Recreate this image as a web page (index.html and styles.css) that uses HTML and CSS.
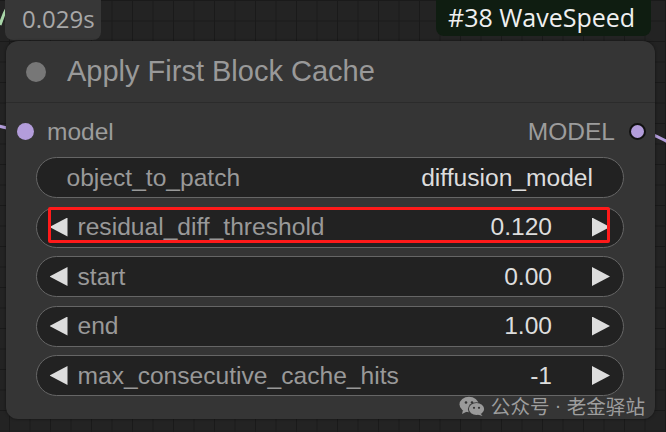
FILE: index.html
```html
<!DOCTYPE html>
<html>
<head>
<meta charset="utf-8">
<link rel="stylesheet" href="styles.css">
</head>
<body>
<div class="canvas">
  <svg class="wires" width="666" height="432" viewBox="0 0 666 432">
    <path d="M0 25 Q3 15 8 6" class="wire-green"/>
    <path d="M-6 125 L20 131" class="wire-model"/>
    <path d="M640 131 C652 133 658 137 668 142" class="wire-model"/>
  </svg>

  <div class="badge badge-time">0.029s</div>
  <div class="badge badge-group">#38 WaveSpeed</div>

  <div class="node">
    <div class="node-title">
      <span class="title-dot"></span>
      <span class="title-text">Apply First Block Cache</span>
    </div>
    <div class="node-body">
      <div class="slots">
        <div class="slot slot-in"><span class="slot-dot"></span><span>model</span></div>
        <div class="slot slot-out"><span>MODEL</span><span class="slot-dot slot-dot-out"></span></div>
      </div>
      <div class="widgets">
        <div class="widget combo">
          <span class="label">object_to_patch</span>
          <span class="value">diffusion_model</span>
        </div>
        <div class="widget number">
          <span class="arrow arrow-left"></span>
          <span class="label">residual_diff_threshold</span>
          <span class="value">0.120</span>
          <span class="arrow arrow-right"></span>
          <span class="highlight"></span>
        </div>
        <div class="widget number">
          <span class="arrow arrow-left"></span>
          <span class="label">start</span>
          <span class="value">0.00</span>
          <span class="arrow arrow-right"></span>
        </div>
        <div class="widget number">
          <span class="arrow arrow-left"></span>
          <span class="label">end</span>
          <span class="value">1.00</span>
          <span class="arrow arrow-right"></span>
        </div>
        <div class="widget number">
          <span class="arrow arrow-left"></span>
          <span class="label">max_consecutive_cache_hits</span>
          <span class="value">-1</span>
          <span class="arrow arrow-right"></span>
        </div>
      </div>
    </div>
    <div class="watermark">
      <svg class="wechat" width="26" height="20" viewBox="0 0 26 20">
        <ellipse cx="10" cy="8.5" rx="9.5" ry="7.8" fill="#9a9a9a"/>
        <path d="M4 14 L3 18 L8 15.5 Z" fill="#9a9a9a"/>
        <ellipse cx="17.5" cy="13" rx="8.6" ry="6.8" fill="#353535"/>
        <ellipse cx="17.5" cy="13" rx="7.6" ry="6" fill="#9a9a9a"/>
        <path d="M21.5 17.5 L23.5 20 L18.5 18.5 Z" fill="#9a9a9a"/>
        <circle cx="7" cy="6.5" r="1.3" fill="#353535"/>
        <circle cx="13" cy="6.5" r="1.3" fill="#353535"/>
        <circle cx="15" cy="11.8" r="1.1" fill="#353535"/>
        <circle cx="20" cy="11.8" r="1.1" fill="#353535"/>
      </svg>
      <span class="wm-text">公众号</span>
      <span class="wm-text wm-dot">·</span>
      <span class="wm-text">老金驿站</span>
    </div>
  </div>
</div>
</body>
</html>
```

FILE: styles.css
```css
* { box-sizing: border-box; }

html, body {
  margin: 0;
  padding: 0;
  width: 666px;
  height: 432px;
  overflow: hidden;
  background: #222;
}

.canvas {
  position: relative;
  width: 666px;
  height: 432px;
  background-color: #232323;
  background-image:
    linear-gradient(to right, #1a1a1a 1px, transparent 1px),
    linear-gradient(to bottom, #1a1a1a 1px, transparent 1px);
  background-size: 20.5px 20.5px;
  background-position: 9px 0px;
  font-family: "Liberation Sans", Arial, sans-serif;
}

.wires {
  position: absolute;
  left: 0;
  top: 0;
}
.wire-green { fill: none; stroke: #a8d5a8; stroke-width: 3; }
.wire-model { fill: none; stroke: #b39ddb; stroke-width: 3; }

.badge {
  position: absolute;
  top: 0;
  border-radius: 0 0 8px 8px;
  font-family: "Open Sans", "Noto Sans", sans-serif;
  font-size: 24px;
  line-height: 1.2;
  display: flex;
  align-items: center;
}
.badge-time {
  left: 5px;
  width: 96px;
  height: 40px;
  background: #373737;
  color: #a8a8a8;
  padding: 0 0 2px 17px;
}
.badge-group {
  left: 436px;
  width: 215px;
  height: 36px;
  background: #0f1d11;
  color: #f0f0f0;
  font-size: 25px;
  padding: 0 0 2px 12px;
}

.node {
  position: absolute;
  left: 6px;
  top: 41px;
  width: 649px;
  height: 378px;
  background: #353535;
  border-radius: 12px;
  box-shadow: 0 0 3px rgba(0,0,0,0.5);
}

.node-title {
  height: 62px;
  display: flex;
  align-items: center;
  padding-left: 20px;
  border-bottom: 1px solid #2b2b2b;
}
.title-dot {
  width: 20px;
  height: 20px;
  border-radius: 50%;
  background: #777;
  margin-right: 21px;
}
.title-text {
  font-size: 29px;
  color: #999;
}

.node-body {
  padding: 0 31px 0 30px;
}

.slots {
  height: 54px;
  display: flex;
  justify-content: space-between;
  align-items: center;
  margin: 0 -22px 0 -19px;
  padding-top: 3px;
  font-size: 24.5px;
  color: #9c9c9c;
}
.slot {
  display: flex;
  align-items: center;
}
.slot-dot {
  width: 17px;
  height: 17px;
  border-radius: 50%;
  background: #b39ddb;
  margin-right: 13px;
}
.slot-dot-out {
  margin-right: 0;
  margin-left: 14px;
  border: 2px solid #111;
}

.widgets {
  display: flex;
  flex-direction: column;
  gap: 8.5px;
}

.widget {
  position: relative;
  height: 41px;
  background: #222;
  border: 1.5px solid #666;
  border-radius: 21px;
  display: flex;
  align-items: center;
  font-size: 24.6px;
}
.widget .label {
  color: #999;
  flex: 1;
  white-space: nowrap;
}
.widget .value {
  color: #ddd;
  white-space: nowrap;
}
.combo {
  padding: 0 30px 0 29.5px;
}
.number {
  padding: 0 13px 0 12.5px;
}
.number .label {
  margin-left: 10px;
}
.arrow {
  width: 18px;
  height: 19px;
  background: #ddd;
}
.arrow-left {
  clip-path: polygon(0 50%, 100% 0, 100% 100%);
}
.arrow-right {
  margin-left: 40px;
  clip-path: polygon(0 0, 100% 50%, 0 100%);
}

.highlight {
  position: absolute;
  left: 10.5px;
  top: -1px;
  width: 562px;
  height: 36px;
  border: 3.5px solid #ff1a1a;
  border-radius: 2px;
}

.watermark {
  position: absolute;
  right: 10px;
  bottom: 3px;
  display: flex;
  align-items: center;
}
.wechat {
  margin-right: 6px;
}
.wm-text {
  font-family: "Noto Sans CJK SC", sans-serif;
  font-size: 19.6px;
  color: #9e9e9e;
  line-height: 1;
}
.wm-dot {
  width: 17px;
  text-align: center;
  font-family: "Liberation Sans", sans-serif;
}
```
